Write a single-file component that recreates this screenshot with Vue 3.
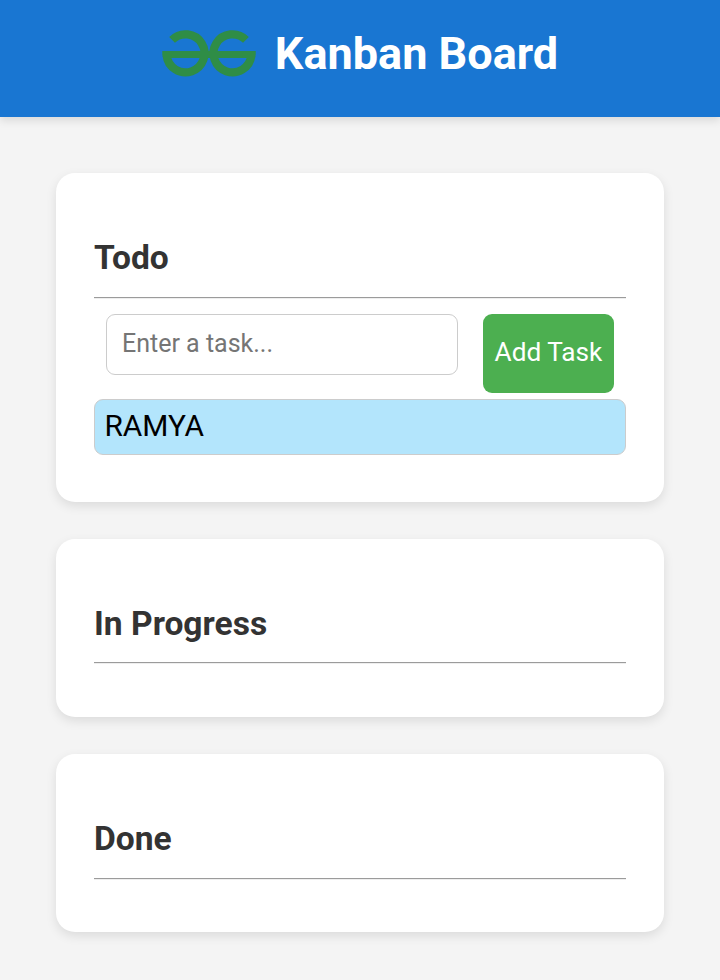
<script setup>
import { ref } from 'vue'

const draft = ref('')
const columns = ref([
  { title: 'Todo', entry: true, tasks: ['RAMYA'] },
  { title: 'In Progress', entry: false, tasks: [] },
  { title: 'Done', entry: false, tasks: [] },
])

function addTask() {
  const text = draft.value.trim()
  if (!text) return
  columns.value[0].tasks.push(text)
  draft.value = ''
}
</script>

<template>
  <div class="page">
    <header class="header">
      <svg class="logo" viewBox="0 0 94 46" aria-hidden="true">
        <g fill="none" stroke="#2f8d46" stroke-width="8.2">
          <path d="M10.07 9.87A19 19 0 1 1 4.6 25.3" />
          <path d="M83.93 9.87A19 19 0 1 0 89.4 25.3" />
        </g>
        <path fill="#2f8d46" d="M0.3 21H93.7V24.5L92.8 28H1.2L0.3 24.5Z" />
      </svg>
      <h1>Kanban Board</h1>
    </header>
    <main class="board">
      <section v-for="column in columns" :key="column.title" class="card">
        <h2>{{ column.title }}</h2>
        <div class="rule"></div>
        <form v-if="column.entry" class="entry" @submit.prevent="addTask">
          <input v-model="draft" type="text" placeholder="Enter a task..." />
          <button type="submit">Add Task</button>
        </form>
        <div v-for="task in column.tasks" :key="task" class="task">{{ task }}</div>
      </section>
    </main>
  </div>
</template>

<style>
body {
  background: #f4f4f4;
}
</style>

<style scoped>
.page {
  box-sizing: border-box;
  min-height: 980px;
  font-family: Roboto, "Liberation Sans", sans-serif;
  background: #f4f4f4;
}

.header {
  box-sizing: border-box;
  display: flex;
  justify-content: center;
  align-items: flex-start;
  gap: 19px;
  height: 117px;
  padding-top: 27px;
  background: #1976d2;
  box-shadow: 0 4px 8px rgba(0, 0, 0, 0.1);
}

.logo {
  width: 94px;
  height: 46px;
  margin-top: 3px;
  overflow: visible;
}

h1 {
  margin: 0;
  font-size: 45px;
  line-height: 53px;
  font-weight: 700;
  white-space: nowrap;
  color: #fff;
}

.board {
  display: flex;
  flex-direction: column;
  gap: 37px;
  padding: 56px 56px 48px;
}

.card {
  box-sizing: border-box;
  min-height: 178px;
  padding: 65px 38px 47px;
  border-radius: 19px;
  background: #fff;
  box-shadow: 0 4px 11px rgba(0, 0, 0, 0.1);
}

h2 {
  margin: 0;
  font-size: 33.6px;
  line-height: 40px;
  font-weight: 700;
  color: #333;
}

.rule {
  height: 1px;
  margin-top: 19px;
  background: #9b9b9b;
  border-bottom: 1px solid #eee;
}

.card:nth-child(2) .rule {
  margin-top: 18px;
}

.entry {
  display: flex;
  align-items: flex-start;
  justify-content: space-between;
  margin-bottom: 6px;
  padding: 15px 12px 0;
}

input {
  box-sizing: border-box;
  width: 352px;
  height: 61px;
  padding: 0 15px 3px;
  border: 1px solid #ccc;
  border-radius: 9px;
  background: #fff;
  font-family: inherit;
  font-size: 25px;
  color: #000;
}

input::placeholder {
  color: #757575;
}

button {
  width: 131px;
  height: 79px;
  padding: 0 0 4px;
  border: none;
  border-radius: 9px;
  background: #4caf50;
  font-family: inherit;
  font-size: 26.2px;
  white-space: nowrap;
  color: #fff;
}

.task {
  box-sizing: border-box;
  height: 56px;
  padding: 0 9.4px;
  border: 1px solid #ccc;
  border-radius: 9px;
  background: #b3e5fc;
  font-size: 29.9px;
  line-height: 52px;
  color: #000;
}
</style>
